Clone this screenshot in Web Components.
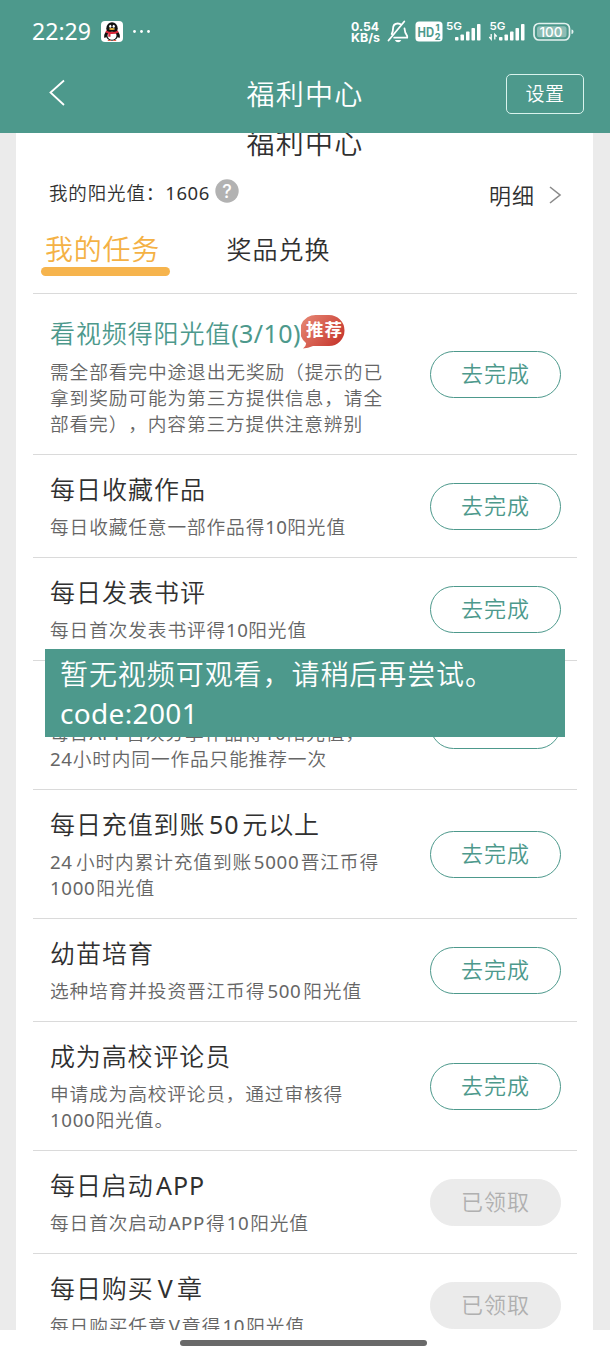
<!DOCTYPE html>
<html lang="zh-CN">
<head>
<meta charset="utf-8">
<title>福利中心</title>
<style>
html,body{margin:0;height:100%;overflow:hidden;background:#fff}
body{font-family:"Noto Sans","Noto Sans CJK SC",sans-serif;font-weight:350;color:#303030;--teal:#4d998c}
</style>
</head>
<body>
<welfare-app></welfare-app>
<script>
const define=(name,html,init)=>customElements.define(name,class extends HTMLElement{
  constructor(){super();this.attachShadow({mode:'open'}).innerHTML=html;}
  connectedCallback(){if(init)init(this,this.shadowRoot);}
});

/* One line of text fitted to a given advance width: pure CJK lines track evenly,
   mixed lines keep a fixed CJK pitch and let the Latin runs take up the rest. */
define('fit-line',`<style>:host{display:block;white-space:pre;text-spacing-trim:space-all}span{display:inline-block}b{font-weight:400}</style><span></span>`,(el,root)=>{
  const s=root.querySelector('span'),w=+el.getAttribute('w');
  const run=()=>{
    const text=el.textContent;if(!text)return;
    s.innerHTML=text.replace(/[\x21-\x7e]+/g,'<b>$&</b>');
    const runs=[...s.querySelectorAll('b')];
    const latin=text.replace(/[^\x21-\x7e]/g,'').length;
    const size=parseFloat(getComputedStyle(el).fontSize);
    s.style.letterSpacing=(latin?size*(size<20?.047:.035):0)+'px';
    runs.forEach(b=>b.style.letterSpacing='0px');
    const now=s.getBoundingClientRect().width;
    if(!now)return;
    if(!latin){s.style.letterSpacing=(w-now)/text.length+'px';return;}
    const mixed=latin<text.length;
    const track=mixed?Math.min((w-now)/latin,size*.035):(w-now)/latin;
    const rest=(w-now-track*latin)/runs.length;
    runs.forEach(b=>{
      b.style.letterSpacing=track+'px';
      b.style.margin=`0 ${rest*.45}px 0 ${rest*.55}px`;
      if(!b.previousSibling)b.style.margin=`0 ${rest}px 0 0`;
    });
  };
  run();
  new MutationObserver(run).observe(el,{childList:true,characterData:true,subtree:true});
});

define('status-bar',`<style>
:host{display:block;height:55px}svg{display:block}
text{fill:#fff;font-family:Inter,"Noto Sans",sans-serif}
</style>
<svg width="610" height="55" viewBox="0 0 610 55">
<text x="32" y="39.800" font-size="23.500" font-weight="400" textLength="59" lengthAdjust="spacingAndGlyphs" style="font-family:'Noto Sans'">22:29</text>
<rect x="101" y="21" width="22" height="21" rx="4" fill="#fff"/>
<path d="M106.500 31c-2 2-3 5-2 7 .8.2 1.700-1 2-2h11c.3 1 1.200 2.200 2 2 1-2 0-5-2-7z" fill="#111"/>
<ellipse cx="112" cy="28.500" rx="5.700" ry="6.300" fill="#111"/><ellipse cx="112" cy="35.300" rx="6.200" ry="5.400" fill="#111"/>
<ellipse cx="112" cy="35.700" rx="4.500" ry="4" fill="#fff"/>
<ellipse cx="110.300" cy="26.300" rx="1.100" ry="1.500" fill="#fff"/><ellipse cx="113.700" cy="26.300" rx="1.100" ry="1.500" fill="#fff"/>
<ellipse cx="112" cy="28.900" rx="3" ry="1" fill="#e8b43c"/>
<path d="M106 30.500q6 3 12 0l.5 2q-3.500 2-8 1.500v2.700h-2.200v-3.200l-2.800-1z" fill="#d9273b"/>
<path d="M107.800 40.500h3M113.200 40.500h3" stroke="#e0604a" stroke-width="1.200"/>
<g fill="#fff"><circle cx="134.500" cy="31.500" r="1.400"/><circle cx="141.500" cy="31.500" r="1.400"/><circle cx="148.500" cy="31.500" r="1.400"/></g>
<text x="351" y="30.500" font-size="12" font-weight="700" textLength="28" lengthAdjust="spacingAndGlyphs">0.54</text>
<text x="351" y="42" font-size="12" font-weight="700" textLength="29" lengthAdjust="spacingAndGlyphs">KB/s</text>
<g fill="none" stroke="#fff" stroke-width="1.800" stroke-linejoin="round" stroke-linecap="round">
<path d="M391.700 34q1.300-2 1.300-5c0-3.500 2-5.500 4.800-5.500 1.500 0 2.700.5 3.500 1.300M404.500 28.500q.2 4 2.700 7.500v1.700h-13M388.500 40.500L404.300 21.500"/></g>
<path d="M394.800 40h6.500q-1 2.300-3.200 2.300t-3.300-2.300z" fill="#fff"/>
<rect x="415.500" y="21.500" width="27" height="20" rx="3.500" fill="#fff"/>
<text x="417.500" y="36.500" font-size="12.500" font-weight="700" style="fill:#4d998c" textLength="16.500" lengthAdjust="spacingAndGlyphs">HD</text>
<text x="435.500" y="30.800" font-size="9" font-weight="800" style="fill:#4d998c">1</text>
<text x="434.700" y="39.500" font-size="9" font-weight="800" style="fill:#4d998c">2</text>
<text x="446" y="29.800" font-size="11" font-weight="600" textLength="16" lengthAdjust="spacingAndGlyphs">5G</text>
<g fill="#fff"><rect x="455" y="37" width="3.500" height="3.500" rx=".8"/><rect x="460.500" y="34.500" width="3.500" height="6" rx=".8"/><rect x="466" y="31.500" width="3.500" height="9" rx=".8"/><rect x="471.500" y="28" width="3.500" height="12.500" rx=".8"/><rect x="477" y="24" width="3.500" height="16.500" rx=".8"/></g>
<text x="489.500" y="29.800" font-size="11" font-weight="600" textLength="16" lengthAdjust="spacingAndGlyphs">5G</text>
<path d="M491.200 34v4.500M489.300 37l1.900 2.300v-5M494.800 39.500v-5l1.900 2" stroke="#fff" stroke-width="1.300" fill="none"/>
<g fill="#fff"><rect x="499" y="37" width="3.500" height="3.500" rx=".8"/><rect x="504.500" y="34.500" width="3.500" height="6" rx=".8"/><rect x="510" y="31.500" width="3.500" height="9" rx=".8"/><rect x="515.500" y="28" width="3.500" height="12.500" rx=".8"/><rect x="521" y="24" width="3.500" height="16.500" rx=".8"/></g>
<rect x="534" y="23.500" width="35.500" height="16.500" rx="5" fill="none" stroke="#e4f1ef" stroke-width="1.700"/>
<rect x="537" y="26.200" width="29.500" height="11" rx="2.500" fill="#8dbdb5"/>
<path d="M571.500 29.500q2 0 2 2.200t-2 2.200z" fill="#e4f1ef"/>
<text x="539.500" y="36.500" font-size="13" font-weight="500" textLength="23" lengthAdjust="spacingAndGlyphs">100</text>
</svg>`);

define('nav-bar',`<style>
:host{display:grid;grid-template-columns:1fr auto 1fr;align-items:center;height:78px;color:#fff}
.back{margin:-2px 0 0 48px}.title{font-size:28px;line-height:40px}
.set{justify-self:end;margin-right:26px;box-sizing:border-box;width:78px;height:40px;border:1px solid #d9f3ed;border-radius:5px;font-size:19px;line-height:39px;display:flex;justify-content:center}
</style>
<svg class="back" width="18" height="28" viewBox="0 0 18 28"><path d="M16 1.500L2.500 13.500 16 26" fill="none" stroke="#fff" stroke-width="1.800"/></svg>
<fit-line class="title" w="117">福利中心</fit-line>
<div class="set"><fit-line w="39">设置</fit-line></div>`);

define('points-bar',`<style>
:host{display:flex;align-items:center;height:44px;padding:0 31px 0 33px}
.p{font-size:18.500px}.q{margin:-3px auto 0 5px}.d{font-size:22px;margin-top:4px}.a{margin:6px 0 0 14px}
text{font:500 18px Inter,sans-serif;fill:#fff}
</style>
<fit-line class="p" w="161">我的阳光值：1606</fit-line>
<svg class="q" width="24" height="24"><circle cx="12" cy="12" r="11.700" fill="#b2b2b2"/><text x="12" y="18.500" text-anchor="middle">?</text></svg>
<fit-line class="d" w="46">明细</fit-line>
<svg class="a" width="13" height="18"><path d="M1 1l10 8L1 17" fill="none" stroke="#8a8a8a" stroke-width="1.600"/></svg>`);

define('task-tabs',`<style>
:host{display:flex;align-items:flex-start;height:79px}
.on{width:129px;margin-left:24.500px;color:#f4b145}
.on fit-line{font-size:28px;line-height:40px;margin:15px 0 0 4.500px}
.on i{display:block;height:9px;border-radius:5px;background:#f6b44d;margin-top:-2px}
.off{font-size:25px;line-height:40px;margin:15px 0 0 57px}
</style>
<div class="on"><fit-line w="115">我的任务</fit-line><i></i></div>
<fit-line class="off" w="104">奖品兑换</fit-line>`);

define('hot-badge',`<style>:host{display:block;width:44px;height:36px}text{font:700 17.500px "Noto Sans CJK SC",sans-serif;fill:#fff}</style>
<svg width="44" height="36"><defs><linearGradient id="g" x1="0" y1="0" x2="1" y2=".6"><stop offset="0" stop-color="#e88b78"/><stop offset="1" stop-color="#c83b31"/></linearGradient></defs>
<path d="M16 1h12a15.500 15.500 0 010 31H12q-5 2-10 2.500 3.500-3 3-5.500A15.700 15.700 0 0116 1z" fill="url(#g)"/><text x="5" y="22" textLength="36">推荐</text></svg>`);

define('pill-button',`<style>
:host{display:flex;justify-content:center;box-sizing:border-box;width:131px;height:47px;border:1.500px solid var(--teal);border-radius:24px;color:var(--teal);font-size:22px;line-height:43px}
:host([done]){background:#ebebeb;border-color:#ebebeb;color:#b0b0b0}
</style><fit-line w="69"></fit-line>`,(el,root)=>{
  root.querySelector('fit-line').textContent=el.textContent;
});

define('task-row',`<style>
:host{display:flex;align-items:center;justify-content:space-between;box-sizing:border-box;padding:17px 16px 17px 17px;border-top:1px solid #dadada}
.t{display:flex;height:36px;margin-bottom:6px;font-size:25px;line-height:34px}
:host([hot]) .t{height:42px;color:var(--teal);line-height:45px}
hot-badge{margin:3px 0 0 0}
.d{font-size:18.700px;line-height:26px;color:#666}
.d fit-line{height:26px}
</style><div><div class="t"></div><div class="d"></div></div><pill-button></pill-button>`);

const tasks=[
 {t:['看视频得阳光值(3/10)',251],d:[['需全部看完中途退出无奖励（提示的已',333],['拿到奖励可能为第三方提供信息，请全',333],['部看完），内容第三方提供注意辨别',313]],hot:1},
 {t:['每日收藏作品',156],d:[['每日收藏任意一部作品得10阳光值',296]]},
 {t:['每日发表书评',156],d:[['每日首次发表书评得10阳光值',257]]},
 {t:['',0],d:[['每日APP首次分享作品得10阳光值，',315],['24小时内同一作品只能推荐一次',277]]},
 {t:['每日充值到账50元以上',270],d:[['24小时内累计充值到账5000晋江币得',329],['1000阳光值',105]]},
 {t:['幼苗培育',104],d:[['选种培育并投资晋江币得500阳光值',312]]},
 {t:['成为高校评论员',181],d:[['申请成为高校评论员，通过审核得',293],['1000阳光值。',124]]},
 {t:['每日启动APP',157],d:[['每日首次启动APP得10阳光值',259]],done:1},
 {t:['每日购买V章',153],d:[['每日购买任意V章得10阳光值',255]],done:1}
];
const line=([s,w])=>{const e=document.createElement('fit-line');e.setAttribute('w',w);e.textContent=s;return e;};

define('task-list',`<style>:host{display:block;margin:0 16px 0 17px}</style>`,(el,root)=>{
  for(const k of tasks){
    const r=document.createElement('task-row'),s=r.shadowRoot;
    if(k.hot)r.setAttribute('hot','');
    if(k.t[0])s.querySelector('.t').append(line(k.t));
    if(k.hot)s.querySelector('.t').append(document.createElement('hot-badge'));
    s.querySelector('.d').append(...k.d.map(line));
    const b=s.querySelector('pill-button');
    b.textContent=k.done?'已领取':'去完成';
    if(k.done)b.setAttribute('done','');
    root.append(r);
  }
});

define('toast-message',`<style>
:host{display:block;box-sizing:border-box;width:520px;height:88px;padding:5px 15px;background:var(--teal);color:#fff;font-size:28px;line-height:40px}
fit-line{height:39px}
</style><fit-line w="434">暂无视频可观看，请稍后再尝试。</fit-line><fit-line w="138">code:2001</fit-line>`);

define('welfare-app',`<style>
:host{display:flex;flex-direction:column;height:1356px;width:610px;position:relative;background:#fff}
header{background:var(--teal);height:133px;flex:none}
main{height:1197px;flex:none;overflow:hidden;background:#ebebeb}
.sheet{background:#fff;margin:0 17px 0 16px;height:1197px;overflow:hidden}
.h{display:flex;justify-content:center;font-size:28px;line-height:40px;height:37px;margin-top:-10px;padding:0 0 10px 1px}
footer{flex:1;display:flex;justify-content:center;align-items:center}
footer i{width:247px;height:6px;border-radius:3px;background:#696969;margin-left:-4px}
toast-message{position:absolute;left:45px;top:649px}
</style>
<header><status-bar></status-bar><nav-bar></nav-bar></header>
<main><div class="sheet"><div class="h"><fit-line w="117">福利中心</fit-line></div><points-bar></points-bar><task-tabs></task-tabs><task-list></task-list></div></main>
<footer><i></i></footer>
<toast-message></toast-message>`);
</script>
</body>
</html>
